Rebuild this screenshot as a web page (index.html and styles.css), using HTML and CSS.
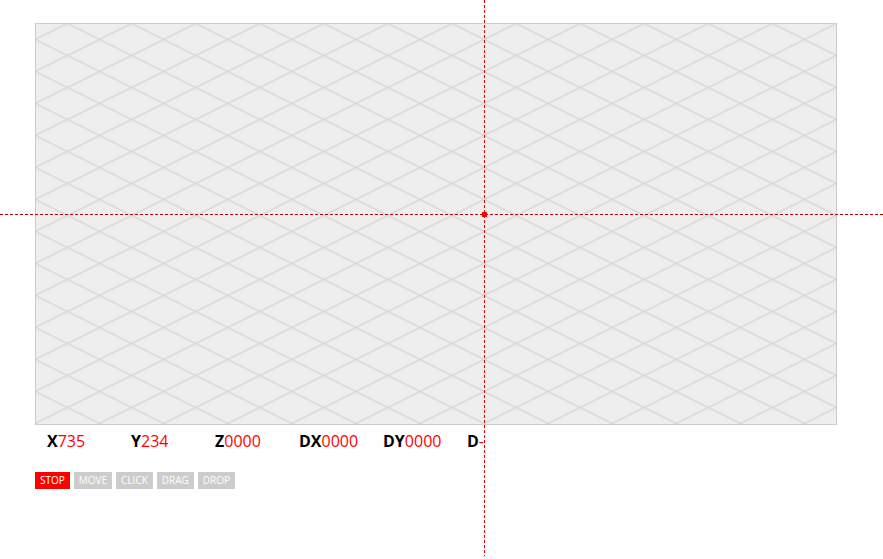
FILE: index.html
```html
<!DOCTYPE html>
<html>
<head>
<meta charset="utf-8">
<link rel="stylesheet" href="styles.css">
</head>
<body>
<div class="page">
  <svg class="board" width="802" height="402" viewBox="0 0 802 402">
    <defs>
      <pattern id="iso" width="64.08" height="32" patternUnits="userSpaceOnUse" x="0.5" y="0.5">
        <path d="M0 16 L32.04 0 L64.08 16 L32.04 32 Z" fill="none" stroke="#d2d2d2" stroke-width="1.3"/>
      </pattern>
      <clipPath id="clip"><rect x="0.5" y="0.5" width="801" height="401"/></clipPath>
    </defs>
    <rect x="0.5" y="0.5" width="801" height="401" fill="#eeeeee"/>
    <rect x="0.5" y="0.5" width="801" height="401" fill="url(#iso)" clip-path="url(#clip)"/>
    <rect x="0.5" y="0.5" width="801" height="401" fill="none" stroke="#cccccc" stroke-width="1"/>
  </svg>
  <div class="status">
    <span class="item"><b>X</b><span class="val">735</span></span>
    <span class="item"><b>Y</b><span class="val">234</span></span>
    <span class="item"><b>Z</b><span class="val">0000</span></span>
    <span class="item"><b>DX</b><span class="val">0000</span></span>
    <span class="item"><b>DY</b><span class="val">0000</span></span>
    <span class="item"><b>D</b><span class="val">-</span></span>
  </div>
  <div class="buttons">
    <span class="btn active">STOP</span>
    <span class="btn">MOVE</span>
    <span class="btn">CLICK</span>
    <span class="btn">DRAG</span>
    <span class="btn">DROP</span>
  </div>
</div>
<div class="cross-v"></div>
<div class="cross-h"></div>
<div class="cross-dot"></div>
</body>
</html>
```

FILE: styles.css
```css
html, body {
  margin: 0;
  padding: 0;
  background: #ffffff;
  height: 100%;
  overflow: hidden;
}
body {
  font-family: "Open Sans", "Liberation Sans", sans-serif;
  position: relative;
}
.page {
  padding: 23px 0 0 35px;
}
.board {
  display: block;
}
.status {
  display: flex;
  margin-top: 4px;
  height: 24px;
  line-height: 24px;
  font-size: 16px;
  padding-left: 12px;
}
.item {
  width: 84px;
  flex: none;
  color: #000;
}
.item b {
  font-weight: 700;
}
.val {
  color: #ff0000;
}
.buttons {
  display: flex;
  gap: 4px;
  margin-top: 19px;
}
.btn {
  display: block;
  background: #cccccc;
  color: #ffffff;
  font-size: 10px;
  height: 17px;
  line-height: 17px;
  padding: 0 5px;
}
.btn.active {
  background: #ff0000;
}
.cross-v {
  position: absolute;
  left: 484px;
  top: 0;
  width: 1px;
  height: 556px;
  background: repeating-linear-gradient(to bottom, #ee0000 0 3px, transparent 3px 5px);
}
.cross-h {
  position: absolute;
  left: 0;
  top: 214px;
  width: 883px;
  height: 1px;
  background: repeating-linear-gradient(to right, #b00000 0 3px, transparent 3px 5px);
}
.cross-dot {
  position: absolute;
  left: 482px;
  top: 212px;
  width: 5px;
  height: 5px;
  background: #ff0000;
}
```
